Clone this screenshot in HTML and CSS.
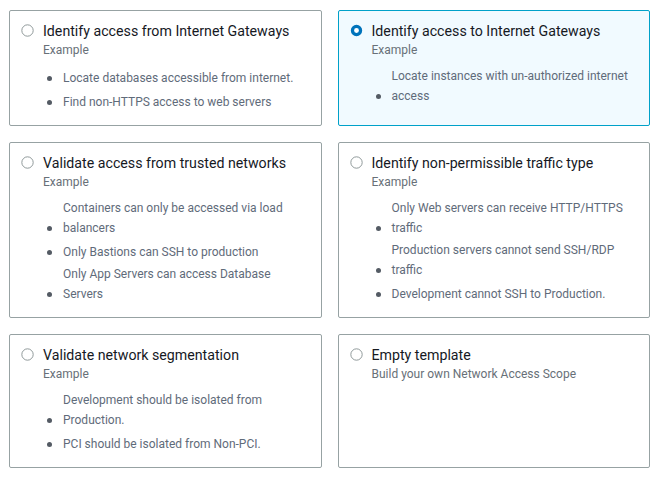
FILE: index.html
```html
<!DOCTYPE html>
<html lang="en">
<head>
<meta charset="utf-8">
<title>Network Access Scope templates</title>
<link rel="stylesheet" href="styles.css">
</head>
<body>
<div class="tiles">
  <div class="tile">
    <svg class="radio" viewBox="0 0 16 16"><circle cx="8" cy="8" r="7" class="off"/></svg>
    <div class="body">
      <div class="title">Identify access from Internet Gateways</div>
      <div class="desc">Example</div>
      <ul class="examples">
        <li><span>Locate databases accessible from internet.</span></li>
        <li><span>Find non-HTTPS access to web servers</span></li>
      </ul>
    </div>
  </div>
  <div class="tile selected">
    <svg class="radio" viewBox="0 0 16 16"><circle cx="8" cy="8" r="5" class="on"/></svg>
    <div class="body">
      <div class="title">Identify access to Internet Gateways</div>
      <div class="desc">Example</div>
      <ul class="examples">
        <li><span>Locate instances with un-authorized internet access</span></li>
      </ul>
    </div>
  </div>
  <div class="tile">
    <svg class="radio" viewBox="0 0 16 16"><circle cx="8" cy="8" r="7" class="off"/></svg>
    <div class="body">
      <div class="title">Validate access from trusted networks</div>
      <div class="desc">Example</div>
      <ul class="examples">
        <li><span>Containers can only be accessed via load balancers</span></li>
        <li><span>Only Bastions can SSH to production</span></li>
        <li><span>Only App Servers can access Database Servers</span></li>
      </ul>
    </div>
  </div>
  <div class="tile">
    <svg class="radio" viewBox="0 0 16 16"><circle cx="8" cy="8" r="7" class="off"/></svg>
    <div class="body">
      <div class="title">Identify non-permissible traffic type</div>
      <div class="desc">Example</div>
      <ul class="examples">
        <li><span>Only Web servers can receive HTTP/HTTPS traffic</span></li>
        <li><span>Production servers cannot send SSH/RDP traffic</span></li>
        <li><span>Development cannot SSH to Production.</span></li>
      </ul>
    </div>
  </div>
  <div class="tile">
    <svg class="radio" viewBox="0 0 16 16"><circle cx="8" cy="8" r="7" class="off"/></svg>
    <div class="body">
      <div class="title">Validate network segmentation</div>
      <div class="desc">Example</div>
      <ul class="examples">
        <li><span>Development should be isolated from Production.</span></li>
        <li><span>PCI should be isolated from Non-PCI.</span></li>
      </ul>
    </div>
  </div>
  <div class="tile">
    <svg class="radio" viewBox="0 0 16 16"><circle cx="8" cy="8" r="7" class="off"/></svg>
    <div class="body">
      <div class="title">Empty template</div>
      <div class="desc">Build your own Network Access Scope</div>
    </div>
  </div>
</div>
</body>
</html>
```

FILE: styles.css
```css
html, body {
  margin: 0;
  padding: 0;
  background: #ffffff;
}

body {
  font-family: Roboto, "Liberation Sans", Arial, sans-serif;
  color: #16191f;
}

.tiles {
  display: grid;
  grid-template-columns: 1fr 1fr;
  gap: 16px;
  width: 641px;
  margin: 10px 0 0 9px;
}

.tile {
  display: flex;
  align-items: flex-start;
  gap: 9px;
  border: 1px solid #97a2a3;
  border-radius: 2px;
  padding: 10px 14px 11px 11px;
  background: #ffffff;
}

.tile.selected {
  border-color: #00a1c9;
  background: #f1faff;
}

.radio {
  flex: none;
  width: 13px;
  height: 13px;
  margin-top: 3px;
}

.radio .off {
  fill: #ffffff;
  stroke: #8d9697;
  stroke-width: 1.2;
}

.radio .on {
  fill: #ffffff;
  stroke: #0073bb;
  stroke-width: 4;
}

.body {
  flex: 1;
  min-width: 0;
}

.title {
  font-size: 14.2px;
  line-height: 20px;
  color: #16191f;
}

.desc {
  font-size: 12px;
  line-height: 18px;
  color: #687078;
}

.examples {
  list-style: none;
  margin: 7px 0 0 0;
  padding: 0;
}

.examples li {
  padding-left: 20px;
  font-size: 12px;
  line-height: 24px;
  color: #5f6b7a;
}

.examples li::before {
  content: "";
  display: inline-block;
  vertical-align: middle;
  width: 5px;
  height: 5px;
  border-radius: 50%;
  background: #545b64;
  margin: 0 11px 0 -16px;
}

.examples li span {
  display: inline-block;
  line-height: 20px;
}
```
